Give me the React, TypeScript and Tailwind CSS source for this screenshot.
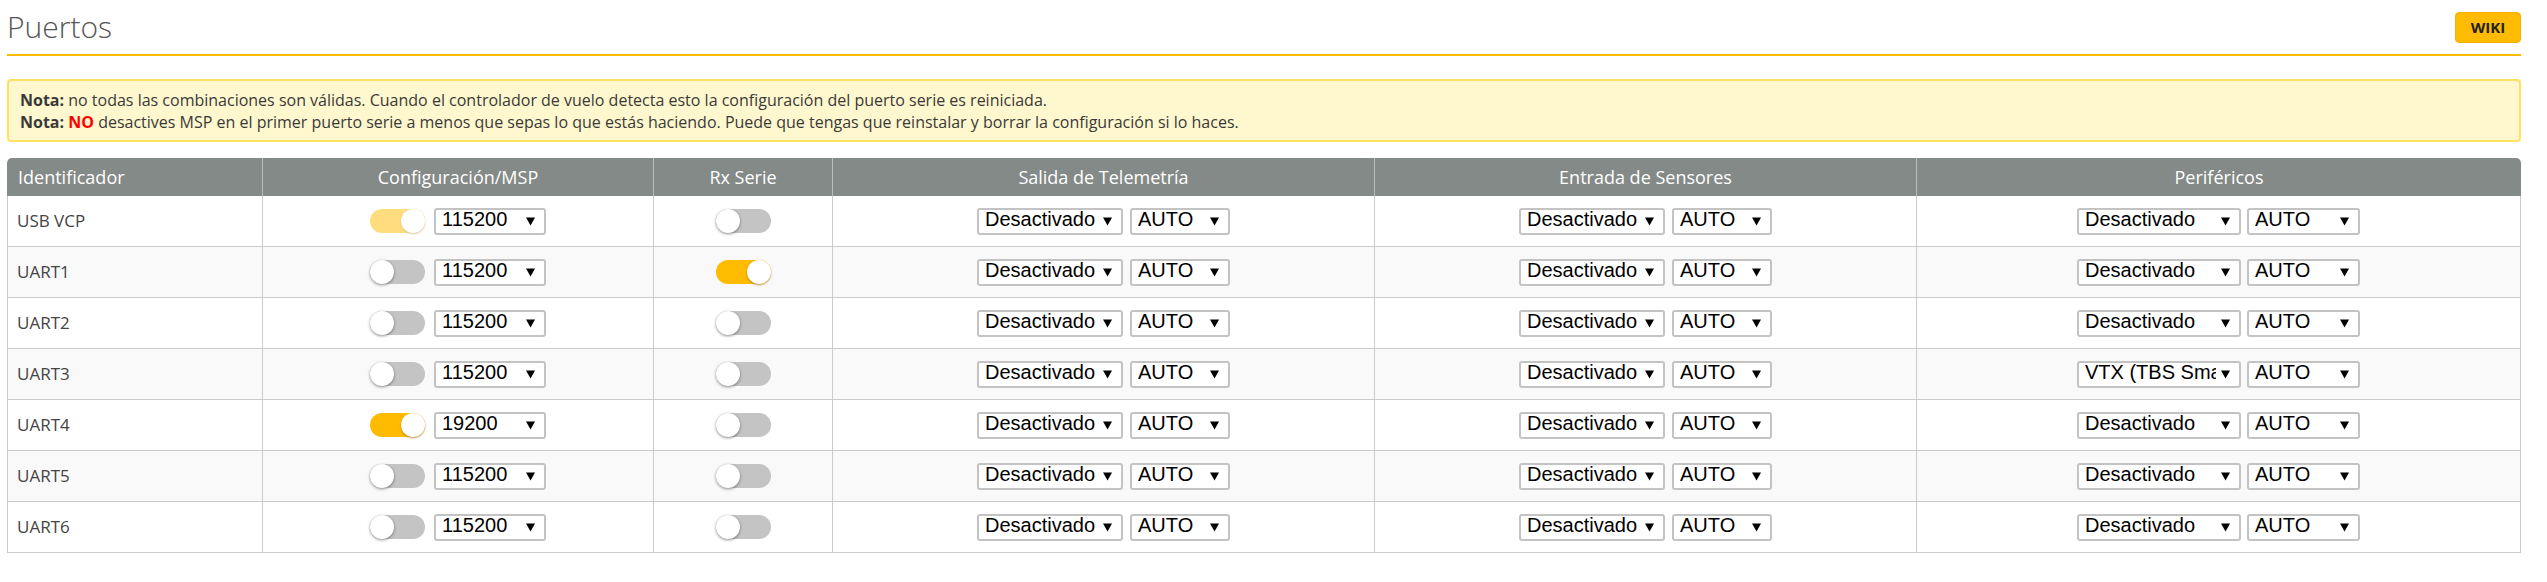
import clsx from "clsx";

type Row = {
  id: string;
  msp: "on" | "off" | "locked";
  baud: string;
  rx: boolean;
  periph: string;
};

const rows: Row[] = [
  { id: "USB VCP", msp: "locked", baud: "115200", rx: false, periph: "Desactivado" },
  { id: "UART1", msp: "off", baud: "115200", rx: true, periph: "Desactivado" },
  { id: "UART2", msp: "off", baud: "115200", rx: false, periph: "Desactivado" },
  { id: "UART3", msp: "off", baud: "115200", rx: false, periph: "VTX (TBS SmartAudio)" },
  { id: "UART4", msp: "on", baud: "19200", rx: false, periph: "Desactivado" },
  { id: "UART5", msp: "off", baud: "115200", rx: false, periph: "Desactivado" },
  { id: "UART6", msp: "off", baud: "115200", rx: false, periph: "Desactivado" },
];

const cols = "grid-cols-[256px_391px_179px_542px_542px_604px]";
const bodyCols = "grid-cols-[255px_391px_179px_542px_542px_603px]";

function Toggle({ on, dim }: { on: boolean; dim?: boolean }) {
  return (
    <span
      className={clsx(
        "flex h-[24px] w-[55px] shrink-0 rounded-full",
        on ? "justify-end bg-[#ffbb00]" : "justify-start bg-[#c4c4c4]",
        dim && "opacity-50"
      )}
    >
      <span
        className={clsx(
          "size-[24px] rounded-full bg-white",
          on
            ? "shadow-[0_1px_2px_rgba(160,100,0,0.7)]"
            : "shadow-[0_1px_3px_rgba(0,0,0,0.45)]"
        )}
      />
    </span>
  );
}

function Select({ value, className }: { value: string; className: string }) {
  return (
    <div
      className={clsx(
        "flex h-[27px] shrink-0 items-center rounded-[3px] border-2 border-[#c3c3c3] bg-white pl-[6px] pr-[9px]",
        className
      )}
    >
      <span className="min-w-0 flex-1 overflow-hidden whitespace-nowrap pb-[4px] font-['Liberation_Sans',Arial,sans-serif] text-[20px] leading-[20px] text-black">
        {value}
      </span>
      <svg width="9" height="9" viewBox="0 0 9 9" className="ml-[5px] shrink-0">
        <path d="M0 0.5h9L4.5 8.5z" fill="#000" />
      </svg>
    </div>
  );
}

export default function App() {
  return (
    <div className="min-h-screen bg-white font-['Open_Sans',sans-serif] text-[#333]">
      <div className="ml-[7px] w-[2514px]">
        <div className="flex items-center justify-between border-b-2 border-[#ffbb00] py-[7px]">
          <h1 className="text-[30px] font-light leading-[40px] text-[#555]">Puertos</h1>
          <a className="flex h-[31px] w-[66px] items-center justify-center rounded-[4px] border border-[#f2b000] bg-[#ffbb00] text-[15px] font-bold text-[#222]">
            WIKI
          </a>
        </div>

        <div className="mt-[23px] rounded-[4px] border-2 border-[#ffe161] bg-[#fff7cd] px-[11px] pt-[8px] pb-[7px] text-[16px] leading-[22px] text-[#3a3a3a]">
          <p>
            <b>Nota:</b> no todas las combinaciones son válidas. Cuando el controlador de vuelo
            detecta esto la configuración del puerto serie es reiniciada.
          </p>
          <p>
            <b>Nota:</b> <b className="text-[#ff0000]">NO</b> desactives MSP en el primer puerto
            serie a menos que sepas lo que estás haciendo. Puede que tengas que reinstalar y borrar
            la configuración si lo haces.
          </p>
        </div>

        <div className="mt-[16px]">
          <div
            className={clsx(
              "grid h-[38px] rounded-t-[5px] bg-[#848a87] text-[18px] font-normal text-white",
              cols
            )}
          >
            <div className="flex items-center border-r border-[#b9bdbb] pl-[11px]">Identificador</div>
            <div className="flex items-center justify-center border-r border-[#b9bdbb]">
              Configuración/MSP
            </div>
            <div className="flex items-center justify-center border-r border-[#b9bdbb]">Rx Serie</div>
            <div className="flex items-center justify-center border-r border-[#b9bdbb]">
              Salida de Telemetría
            </div>
            <div className="flex items-center justify-center border-r border-[#b9bdbb]">
              Entrada de Sensores
            </div>
            <div className="flex items-center justify-center">Periféricos</div>
          </div>

          <div className="border-x border-[#cbcbcb]">
            {rows.map((r, i) => (
              <div
                key={r.id}
                className={clsx(
                  "grid h-[51px] border-b border-[#cbcbcb]",
                  bodyCols,
                  i % 2 === 1 ? "bg-[#f9f9f9]" : "bg-white"
                )}
              >
                <div className="flex items-center border-r border-[#cbcbcb] pl-[9px] text-[17px] font-normal text-[#444]">
                  {r.id}
                </div>
                <div className="flex items-center justify-center gap-[9px] border-r border-[#cbcbcb]">
                  <Toggle on={r.msp !== "off"} dim={r.msp === "locked"} />
                  <Select value={r.baud} className="w-[112px]" />
                </div>
                <div className="flex items-center justify-center border-r border-[#cbcbcb]">
                  <Toggle on={r.rx} />
                </div>
                <div className="flex items-center justify-center gap-[7px] border-r border-[#cbcbcb]">
                  <Select value="Desactivado" className="w-[146px]" />
                  <Select value="AUTO" className="w-[100px]" />
                </div>
                <div className="flex items-center justify-center gap-[7px] border-r border-[#cbcbcb]">
                  <Select value="Desactivado" className="w-[146px]" />
                  <Select value="AUTO" className="w-[100px]" />
                </div>
                <div className="flex items-center justify-center gap-[6px]">
                  <Select value={r.periph} className="w-[164px]" />
                  <Select value="AUTO" className="w-[113px]" />
                </div>
              </div>
            ))}
          </div>
        </div>
      </div>
    </div>
  );
}
